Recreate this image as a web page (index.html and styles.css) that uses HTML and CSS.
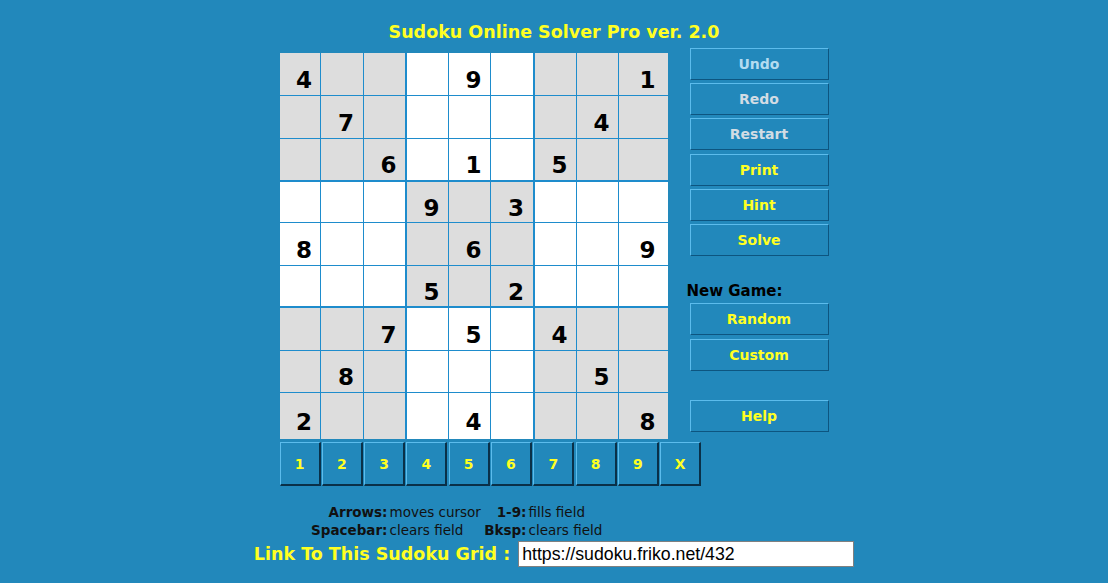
FILE: index.html
```html
<!DOCTYPE html>
<html lang="en">
<head>
<meta charset="utf-8">
<title>Sudoku Online Solver Pro</title>
<link rel="stylesheet" href="styles.css">
</head>
<body>
<h1 class="title">Sudoku Online Solver Pro ver. 2.0</h1>
<div class="layout">
  <div class="board">
    <div class="cell g">4</div><div class="cell g"></div><div class="cell g"></div><div class="cell"></div><div class="cell">9</div><div class="cell"></div><div class="cell g"></div><div class="cell g"></div><div class="cell g">1</div>
    <div class="cell g"></div><div class="cell g">7</div><div class="cell g"></div><div class="cell"></div><div class="cell"></div><div class="cell"></div><div class="cell g"></div><div class="cell g">4</div><div class="cell g"></div>
    <div class="cell g"></div><div class="cell g"></div><div class="cell g">6</div><div class="cell"></div><div class="cell">1</div><div class="cell"></div><div class="cell g">5</div><div class="cell g"></div><div class="cell g"></div>
    <div class="cell"></div><div class="cell"></div><div class="cell"></div><div class="cell g">9</div><div class="cell g"></div><div class="cell g">3</div><div class="cell"></div><div class="cell"></div><div class="cell"></div>
    <div class="cell">8</div><div class="cell"></div><div class="cell"></div><div class="cell g"></div><div class="cell g">6</div><div class="cell g"></div><div class="cell"></div><div class="cell"></div><div class="cell">9</div>
    <div class="cell"></div><div class="cell"></div><div class="cell"></div><div class="cell g">5</div><div class="cell g"></div><div class="cell g">2</div><div class="cell"></div><div class="cell"></div><div class="cell"></div>
    <div class="cell g"></div><div class="cell g"></div><div class="cell g">7</div><div class="cell"></div><div class="cell">5</div><div class="cell"></div><div class="cell g">4</div><div class="cell g"></div><div class="cell g"></div>
    <div class="cell g"></div><div class="cell g">8</div><div class="cell g"></div><div class="cell"></div><div class="cell"></div><div class="cell"></div><div class="cell g"></div><div class="cell g">5</div><div class="cell g"></div>
    <div class="cell g">2</div><div class="cell g"></div><div class="cell g"></div><div class="cell"></div><div class="cell">4</div><div class="cell"></div><div class="cell g"></div><div class="cell g"></div><div class="cell g">8</div>
  </div>
  <div class="controls">
    <button class="btn dim undo">Undo</button>
    <button class="btn dim">Redo</button>
    <button class="btn dim">Restart</button>
    <button class="btn">Print</button>
    <button class="btn">Hint</button>
    <button class="btn">Solve</button>
    <div class="label">New Game:</div>
    <button class="btn">Random</button>
    <button class="btn">Custom</button>
    <button class="btn help">Help</button>
  </div>
  <div class="numpad">
    <button class="key">1</button><button class="key">2</button><button class="key">3</button>
    <button class="key">4</button><button class="key">5</button><button class="key">6</button>
    <button class="key">7</button><button class="key">8</button><button class="key">9</button>
    <button class="key">X</button>
  </div>
  <table class="keys">
    <tr><td class="k c1">Arrows:</td><td class="v c2">moves cursor</td><td class="k c3">1-9:</td><td class="v">fills field</td></tr>
    <tr><td class="k c1">Spacebar:</td><td class="v c2">clears field</td><td class="k c3">Bksp:</td><td class="v">clears field</td></tr>
  </table>
</div>
<div class="link-row">
  <span class="link-label">Link To This Sudoku Grid :</span>
  <input class="link-input" type="text" value="https://sudoku.friko.net/432" readonly>
</div>
</body>
</html>
```
FILE: styles.css
```css
html, body {
  margin: 0;
  padding: 0;
}
body {
  background: #2288bb;
  font-family: "DejaVu Sans", Verdana, sans-serif;
  color: #000;
  width: 1108px;
  height: 583px;
  overflow: hidden;
}
.title {
  margin: 0;
  padding-top: 21px;
  height: 22px;
  line-height: 22px;
  font-size: 17.5px;
  font-weight: bold;
  color: #ffff22;
  text-align: center;
}
.layout {
  width: 549px;
  margin: 5px auto 0;
  display: grid;
  grid-template-columns: 388px 139px;
  column-gap: 22px;
  align-items: start;
}
.board {
  margin-top: 5px;
  display: grid;
  grid-template-columns: 41px 43px 43px 42px 42px 44px 42px 42px 49px;
  grid-template-rows: 43px 43px 43px 41px 43px 42px 43px 42px 46px;
}
.cell {
  box-sizing: border-box;
  background: #ffffff;
  border-right: 1px solid #1e8ccc;
  border-bottom: 1px solid #1e8ccc;
  font-size: 23px;
  font-weight: bold;
  display: flex;
  align-items: center;
  justify-content: center;
  padding: 11px 0 0 9px;
}
.cell.g {
  background: #dddddd;
}
.cell:nth-child(9n+3),
.cell:nth-child(9n+6) {
  border-right-width: 2px;
}
.cell:nth-child(9n) {
  border-right: 0;
}
.cell:nth-child(n+19):nth-child(-n+27),
.cell:nth-child(n+46):nth-child(-n+54) {
  border-bottom-width: 2px;
}
.cell:nth-child(n+73) {
  border-bottom: 0;
}
.controls {
  display: flex;
  flex-direction: column;
  gap: 3.2px;
}
.btn {
  width: 139px;
  height: 32px;
  margin: 0;
  padding: 0;
  background: #2288bb;
  border: 1px solid;
  border-color: #5cbcec #0d5580 #0d5580 #5cbcec;
  color: #ffff22;
  font-family: inherit;
  font-size: 14px;
  font-weight: bold;
}
.btn.dim {
  color: #d2dce4;
}
.btn.undo {
  color: #b4dcf0;
}
.label {
  margin-top: 23px;
  margin-left: -3px;
  height: 18px;
  line-height: 18px;
  font-size: 15px;
  font-weight: bold;
  color: #000;
}
.btn.help {
  margin-top: 26px;
}
.numpad {
  grid-column: 1 / span 2;
  margin-top: 3px;
  display: grid;
  grid-template-columns: repeat(10, 41px);
  column-gap: 1.3px;
}
.key {
  height: 44px;
  margin: 0;
  padding: 0;
  background: #2288bb;
  border: 1px solid;
  border-width: 1px 2px 2px 1px;
  border-color: #5cbcec #0a3048 #0a3048 #5cbcec;
  color: #ffff22;
  font-family: inherit;
  font-size: 14px;
  font-weight: bold;
}
.keys {
  grid-column: 1 / span 2;
  margin: 17px 0 0 31px;
  border-collapse: collapse;
  font-size: 13.5px;
  line-height: 18px;
}
.keys td {
  padding: 0;
  white-space: nowrap;
}
.k {
  font-weight: bold;
  text-align: right;
  color: #111;
}
.v {
  padding-left: 2px !important;
  color: #111;
}
.c1 { width: 77px; }
.c2 { width: 94px; }
.c3 { width: 43px; }
.link-row {
  margin-top: 2px;
  display: flex;
  justify-content: center;
  align-items: center;
  gap: 8px;
}
.link-label {
  font-size: 17.5px;
  font-weight: bold;
  color: #ffff22;
}
.link-input {
  width: 336px;
  height: 26px;
  box-sizing: border-box;
  margin: 0;
  padding: 0 3px;
  border: 1px solid #808080;
  background: #fff;
  font-family: "Liberation Sans", Arial, sans-serif;
  font-size: 17.7px;
  color: #000;
}
```
